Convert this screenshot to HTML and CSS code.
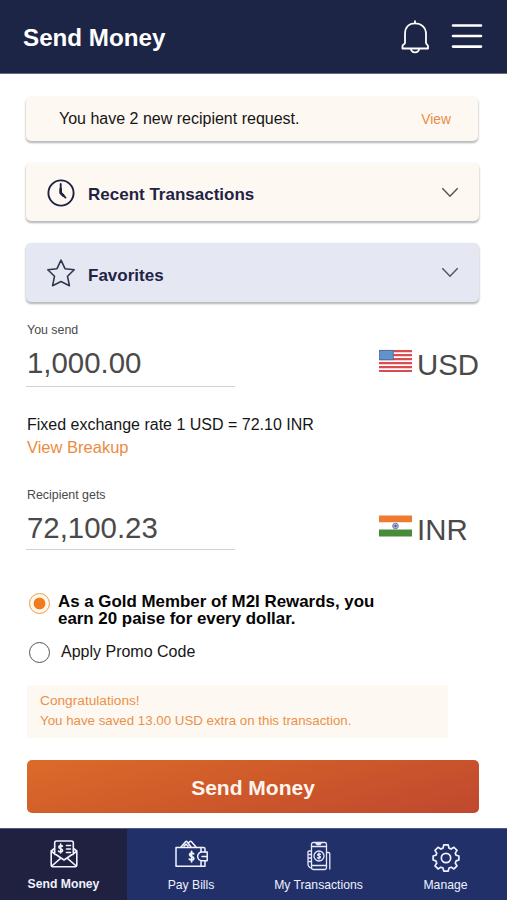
FILE: index.html
```html
<!DOCTYPE html>
<html lang="en">
<head>
<meta charset="utf-8">
<title>Send Money</title>
<link rel="stylesheet" href="styles.css">
</head>
<body>
<div class="app">
  <header class="header">
    <h1 class="header-title">Send Money</h1>
    <div class="header-actions">
      <svg class="bell" width="28" height="34" viewBox="0 0 28 34" fill="none" stroke="#fff" stroke-width="1.8" stroke-linejoin="round" stroke-linecap="round">
        <path d="M14 1.200v2M4 23V14C4 7 8 3.400 14 3.400S25 7 25 14v9c0 1 2 1.700 2 3v2.500H1.500V26C1.500 24.700 4 24 4 23Z"/>
        <path d="M10 28.800c.2 2.400 1.700 3.600 4 3.600s3.900-1.200 4.100-3.600"/>
      </svg>
      <svg width="32" height="28" viewBox="0 0 32 28" stroke="#fff" stroke-width="2.600" stroke-linecap="round"><path d="M2 2.500h28M2 13h28M2 23.600h28"/></svg>
    </div>
  </header>
  <main class="main">
    <section class="card notice"><span>You have 2 new recipient request.</span><a class="notice-link">View</a></section>
    <section class="card panel recent">
      <svg class="panel-icon" width="28" height="28" viewBox="0 0 28 28" fill="none" stroke="#1f2142" stroke-width="1.900" stroke-linecap="round"><circle cx="14" cy="14" r="12.600"/><path d="M13.700 5v9l4.800 4.600"/><path d="M13.700 10v4l2.600 2.500" stroke-width="2.600"/></svg>
      <span class="panel-label">Recent Transactions</span>
      <svg class="chevron" width="18" height="12" viewBox="0 0 18 12" fill="none" stroke="#555" stroke-width="1.500"><path d="M1.300 1.300 9 9.200l7.700-7.900"/></svg>
    </section>
    <section class="card panel favorites">
      <svg class="panel-icon" width="28" height="28" viewBox="0 0 28 28" fill="none" stroke="#30364e" stroke-width="1.600" stroke-linejoin="round"><path d="M14 1.200 18 9.700l9.200 1-6.700 6.600 1.900 9.400-8.400-4.200-8.400 4.200 1.900-9.400L.8 10.700l9.200-1Z"/></svg>
      <span class="panel-label">Favorites</span>
      <svg class="chevron" width="18" height="12" viewBox="0 0 18 12" fill="none" stroke="#555" stroke-width="1.500"><path d="M1.300 1.300 9 9.200l7.700-7.900"/></svg>
    </section>
    <section class="amount amount-send">
      <div class="field"><div class="field-label">You send</div><div class="field-value">1,000.00</div></div>
      <div class="currency">
        <svg class="flag" width="33" height="24" viewBox="0 0 33 24">
          <path fill="#fff" d="M0 1h33v22H0z"/>
          <path stroke="#d94c4f" stroke-width="2.200" d="M0 2.100h33M0 6.100h33M0 10.100h33M0 14.100h33M0 18.100h33M0 22h33"/>
          <path fill="#5e93cc" stroke="#3f669e" stroke-width=".7" d="M.4 1.400h14v9.300H.4z"/>
        </svg>
        <span>USD</span>
      </div>
    </section>
    <section class="rate"><div>Fixed exchange rate 1 USD = 72.10 INR</div><a class="rate-link">View Breakup</a></section>
    <section class="amount amount-get">
      <div class="field"><div class="field-label">Recipient gets</div><div class="field-value">72,100.23</div></div>
      <div class="currency">
        <svg class="flag" width="33" height="24" viewBox="0 0 33 24">
          <path fill="#ee7b30" d="M0 1.500h33v7H0z"/><path fill="#fff" d="M0 8.500h33v7H0z"/><path fill="#478b3b" d="M0 15.500h33v7H0z"/>
          <circle cx="16.500" cy="12" r="2.800" fill="#b9bddf" stroke="#7378ad"/><circle cx="16.500" cy="12" r="1.200" fill="#50558e"/>
        </svg>
        <span>INR</span>
      </div>
    </section>
    <section class="options">
      <label class="option member"><span class="radio radio-on"></span><span>As a Gold Member of M2I Rewards, you<br>earn 20 paise for every dollar.</span></label>
      <label class="option promo"><span class="radio"></span><span>Apply Promo Code</span></label>
    </section>
    <section class="savings"><div class="savings-title">Congratulations!</div><div class="savings-text">You have saved 13.00 USD extra on this transaction.</div></section>
    <button class="submit">Send Money</button>
  </main>
  <nav class="nav">
    <a class="tab tab-active">
      <svg width="30" height="30" viewBox="0 0 30 30" fill="none" stroke="#f1f3ff" stroke-width="1.600" stroke-linejoin="round" stroke-linecap="round">
        <path d="M5.700 15.500V3.800c0-1.200.8-1.800 1.800-1.800h15c1 0 1.800.6 1.800 1.800v11.700M5.500 9.500 2.200 12v14.200c0 1 .7 1.600 1.600 1.600h22.400c.9 0 1.600-.6 1.600-1.600V12l-3.300-2.500M2.500 12.500 15 21l12.500-8.500M2.800 27l9-7.800M27.200 27l-9-7.800"/>
        <path d="M17.500 6.500h4M17.500 10h4M17.500 13.500h4"/>
        <path d="M13.500 7.200c-.7-.8-3.700-1-3.700.9 0 2.200 3.800 1.300 3.800 3.300 0 1.800-3 1.800-4 .7M11.700 5v9"/>
      </svg><span>Send Money</span>
    </a>
    <a class="tab">
      <svg width="34" height="30" viewBox="0 0 34 30" fill="none" stroke="#f1f3ff" stroke-width="1.500" stroke-linejoin="round" stroke-linecap="round">
        <path d="M27 8.500H2v18.700h29V22M27 8.500h2.500c1 0 1.500.7 1.500 1.500v3M7 8l4.500-5.200c.6-.6 1-.6 1.600 0L17 8M14.200 4.200l1.500-1.500c.6-.5 1.200-.5 1.800 0L22 8M10 7l2-2 2 2"/>
        <path d="M28 13h5.200v8.700H28a4.300 4.300 0 0 1 0-8.700ZM27 8.500V13M27 22v5M28 17.400h5"/>
        <path stroke-width="1.800" d="M19.600 14.800c-.8-1-4-1-4 1 0 2.300 4.200 1.300 4.200 3.600 0 2-3.400 2-4.500.8M17.600 12.300v10.500"/>
      </svg><span>Pay Bills</span>
    </a>
    <a class="tab">
      <svg class="icon-phone" width="26" height="30" viewBox="0 0 26 30" fill="none" stroke="#e5e9fc" stroke-width="1.300" stroke-linejoin="round" stroke-linecap="round">
        <rect x="5.500" y="1.500" width="15" height="27" rx="1.800"/><path d="M5.500 5.500h15M5.500 24.500h15M10 2.500h5l-1 1h-3ZM5 10H3.200c-1 0-1.200.6-1.200 1v12c0 2 1.300 3.500 3.500 4M2 13.500h3.500M2 17h3.500M2 20.500h3.500M20.500 11.500h2c1 0 1.300.7 1.300 1.300V28"/>
        <circle cx="13" cy="15" r="5"/><path d="M14.500 13.300c-.7-.7-2.900-.7-2.900.5 0 1.400 2.900.8 2.900 2.300 0 1.300-2.200 1.400-3.100.6M13 11.900v6.200"/>
      </svg><span>My Transactions</span>
    </a>
    <a class="tab">
      <svg class="icon-gear" width="28" height="28" viewBox="0 1 30 30" fill="none" stroke="#f1f3ff" stroke-width="1.800" stroke-linejoin="round">
        <path d="M12.600 2h4.800l.8 3.400 2.300 1 3-1.900 3.300 3.300-1.900 3 1 2.300 2.900.7v4.400l-2.900.9-1 2.300 1.900 3-3.300 3.300-3-1.900-2.300 1-.8 3.200h-4.800l-.8-3.200-2.300-1-3 1.900-3.300-3.300 1.900-3-1-2.300-2.900-.9v-4.400l2.900-.7 1-2.300-1.900-3 3.300-3.300 3 1.900 2.300-1Z"/><circle cx="15" cy="16" r="5"/>
      </svg><span>Manage</span>
    </a>
  </nav>
</div>
</body>
</html>
```

FILE: styles.css
```css
* { box-sizing: border-box; }
body { margin: 0; background: #fff; color: #161616; font-family: "Liberation Sans", Arial, sans-serif; }
.app { width: 507px; height: 900px; display: flex; flex-direction: column; overflow: hidden; }
.header { height: 74px; flex: none; background: #1d2547; display: flex; justify-content: space-between; align-items: center; padding: 1px 24px 0 23px; border-bottom: 1px solid #666b80; }
.header-title { margin: 2px 0 0; font-size: 24.2px; line-height: 28px; color: #fff; }
.header-actions { display: flex; align-items: center; gap: 22px; }
.main { flex: 1; padding: 23px 28px 0 26px; display: flex; flex-direction: column; align-items: stretch; }
.card { flex: none; border-radius: 5px; background: #fef8f2; box-shadow: 0 2px 2px #b9bab9, 0 1px 3px rgba(0,0,0,.16); display: flex; align-items: center; }
.notice { height: 44px; margin-right: 1px; padding: 0 27px 0 33px; justify-content: space-between; font-size: 16px; }
.notice-link { color: #ec8b42; font-size: 13.8px; }
.panel { padding: 0 20px 0 21px; }
.recent { height: 58px; margin-top: 22px; }
.favorites { height: 59px; margin-top: 22px; background: #e5e8f2; }
.panel-label { font-size: 17px; font-weight: bold; color: #1f2346; margin: 6px 0 0 13px; }
.panel-icon { margin-top: 1px; }
.chevron { margin-left: auto; margin-top: 1px; }
.amount { display: flex; justify-content: space-between; flex: none; color: #4a4a4a; }
.amount-send { margin-top: 20px; }
.amount-get { margin-top: 29px; }
.field { width: 209px; height: 65px; padding-left: 1px; border-bottom: 1px solid #d2d2d2; }
.field-label { font-size: 12.4px; line-height: 16px; }
.field-value { font-size: 29.4px; line-height: 36px; margin-top: 7px; }
.amount-get .field { height: 63px; }
.currency { display: flex; width: 100px; margin-top: 25px; height: 36px; align-items: flex-start; gap: 5px; font-size: 29.4px; line-height: 36px; }
.flag { margin-top: 2px; flex: none; }
.rate { margin: 28px 0 0 1px; font-size: 16px; line-height: 20px; height: 43px; }
.rate-link { display: block; color: #ec8b42; font-size: 16.5px; line-height: 20px; margin-top: 2px; }
.options { margin: 43px 0 0 3px; }
.option { display: flex; align-items: flex-start; }
.member { font-size: 16.9px; font-weight: bold; line-height: 17px; color: #050505; gap: 8px; }
.promo { margin-top: 15px; font-size: 16px; line-height: 20px; gap: 11px; }
.radio { width: 21px; height: 21px; flex: none; border: 1.5px solid #555; border-radius: 50%; }
.radio-on { border: 1px solid #ee9a50; background: radial-gradient(circle, #f27b1d 0 5.500px, #fff7e9 6.200px); }
.savings { margin: 22px 0 0 1px; width: 421px; height: 53px; padding: 6px 13px; background: #fef8f2; color: #ea9148; font-size: 13.3px; line-height: 20px; }
.savings-title { font-size: 13.700px; }
.submit { display: block; flex: none; width: 452px; height: 53px; margin: 22px 0 0 1px; padding: 3px 0 0; border: 0; border-radius: 5px; background: linear-gradient(165deg, #dc6b2a, #cf5b2a 45%, #bf482f); color: #fff5ee; font: bold 21px "Liberation Sans", Arial, sans-serif; }
.nav { flex: none; height: 72px; display: grid; grid-template-columns: 127px 128px 127px 125px; background: #213069; border-top: 1px solid #4f5889; }
.tab { display: flex; flex-direction: column; align-items: center; padding-top: 10px; color: #eef1ff; font-size: 12.2px; line-height: 16px; }
.tab span { margin-top: 8px; }
.tab:last-child { padding-left: 2px; }
.tab-active { background: #202140; font-weight: bold; }
.tab-active span { margin-top: 7px; }
.tab .icon-phone { margin-top: 2px; }
.icon-phone + span { margin-top: 6px; }
.tab .icon-gear { margin-top: 5px; }
.tab .icon-gear + span { margin-top: 5px; }
.tab .icon-phone + span { margin-top: 6px; }
```
